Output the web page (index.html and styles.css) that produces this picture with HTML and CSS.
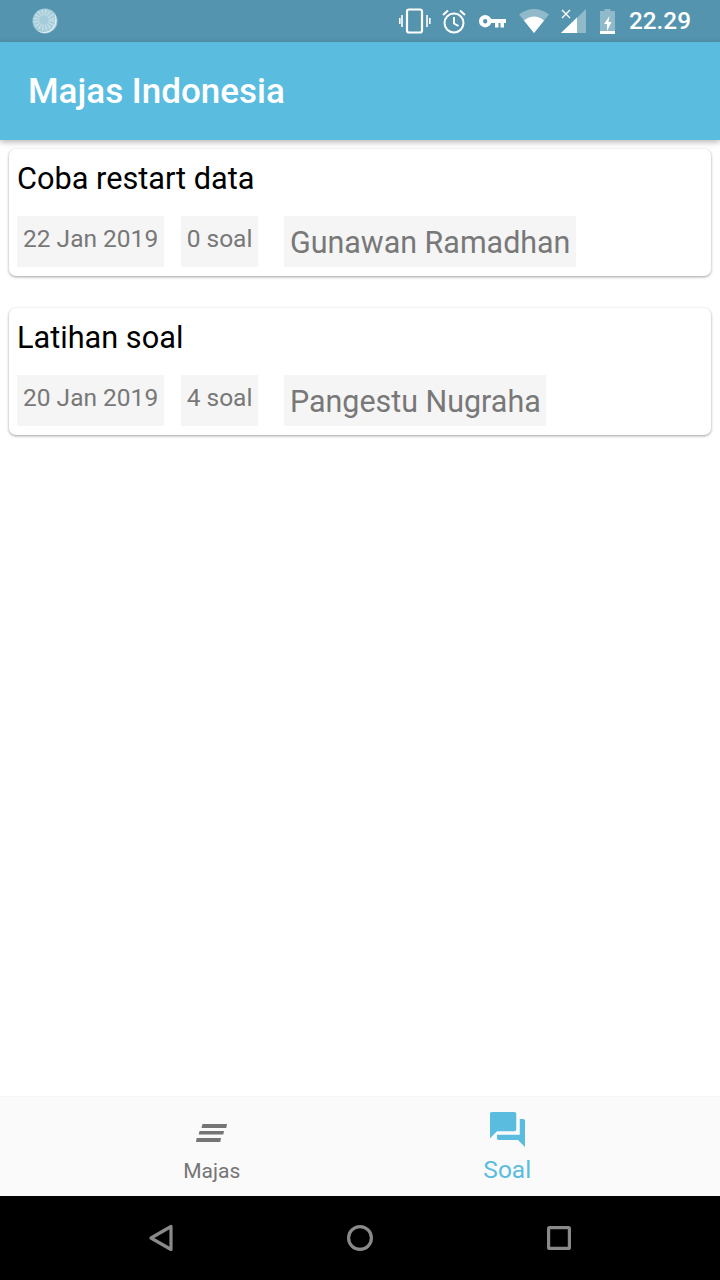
FILE: index.html
```html
<!DOCTYPE html>
<html lang="id">
<head>
<meta charset="utf-8">
<title>Majas Indonesia</title>
<link rel="stylesheet" href="styles.css">
</head>
<body>
<div class="screen">
  <div class="status">
    <svg class="spinner" width="26" height="26" viewBox="0 0 26 26"><circle cx="13" cy="13" r="12.500" fill="#a4ccd9"/><circle cx="12" cy="12" r="7.500" fill="none" stroke="#c3dee6" stroke-width="6" stroke-dasharray="1.500 1.500"/><path d="M20 3A12.500 12.500 0 0 1 4 22A11.500 11.500 0 0 0 20 3Z" fill="#e6f3f6"/></svg>
    <div class="status-right">
      <svg class="ic-vibrate" width="32" height="26" viewBox="0 0 32 26"><rect x="8" y="1.500" width="15" height="23" rx="2" fill="none" stroke="#fff" stroke-width="2.200"/><path d="M3 7v12M0.800 10v6M28 7v12M30.800 10v6" stroke="#fff" stroke-width="1.600" fill="none"/></svg>
      <svg class="ic-alarm" width="24" height="26" viewBox="0 0 24 26"><circle cx="12" cy="15" r="9.500" fill="none" stroke="#fff" stroke-width="2"/><path d="M12 9v6.500l4.500 2.500M1 7l5-4.500M23 7l-5-4.500" fill="none" stroke="#fff" stroke-width="2"/></svg>
      <svg class="ic-key" width="27" height="13" viewBox="0 0 27 13"><circle cx="6.200" cy="6.200" r="4.200" fill="none" stroke="#fff" stroke-width="4"/><path d="M11 4h16v4h-2v4.500h-3.500V8h-2v4.500H16V8h-5z" fill="#fff"/></svg>
      <svg class="ic-wifi" width="30" height="24" viewBox="0 0 30 24"><path d="M0 5.500Q15 -5.500 30 5.500L15 24Z" fill="#fff" opacity=".35"/><path d="M5 11.500Q15 3.500 25 11.500L15 24Z" fill="#fff"/></svg>
      <svg class="ic-signal" width="25" height="24" viewBox="0 0 25 24"><path d="M25 0V24H0Z" fill="#fff" opacity=".35"/><path d="M16 8.600V24H0Z" fill="#fff"/><path d="M1 1l8 8M9 1l-8 8" stroke="#fff" stroke-width="1.300" fill="none"/></svg>
      <svg class="ic-battery" width="15" height="25" viewBox="0 0 15 25"><path d="M4.500 0h6v2H15v23H0V2h4.500z" fill="#fff" opacity=".35"/><path d="M0 22h15v3H0z" fill="#fff"/><path d="M9.500 7L4 15h3v7l4.500-9H8.500z" fill="#fff"/></svg>
      <span class="clock">22.29</span>
    </div>
  </div>
  <header class="appbar"><h1 class="appbar-title">Majas Indonesia</h1></header>
  <main class="list">
    <article class="card">
      <h2 class="card-title">Coba restart data</h2>
      <div class="meta">
        <span class="chip chip-date">22 Jan 2019</span>
        <span class="chip chip-count">0 soal</span>
        <span class="chip chip-name">Gunawan Ramadhan</span>
      </div>
    </article>
    <article class="card">
      <h2 class="card-title">Latihan soal</h2>
      <div class="meta">
        <span class="chip chip-date">20 Jan 2019</span>
        <span class="chip chip-count">4 soal</span>
        <span class="chip chip-name">Pangestu Nugraha</span>
      </div>
    </article>
  </main>
  <nav class="tabs">
    <div class="tab">
      <div class="tab-icon"><svg width="31" height="18" viewBox="0 0 31 18"><path d="M6.500 0H31l-.7 4H5.500zM3.500 7H28l-.7 3.500H2.700zM.7 14H25l-.7 4H0z" fill="#757575"/></svg></div>
      <span class="tab-label">Majas</span>
    </div>
    <div class="tab tab-active">
      <div class="tab-icon"><svg width="35" height="35" viewBox="2 2 20 20"><path d="M21 6h-2v9H6v2c0 .55.45 1 1 1h11l4 4V7c0-.55-.45-1-1-1zm-4 6V3c0-.55-.45-1-1-1H3c-.55 0-1 .45-1 1v14l4-4h10c.55 0 1-.45 1-1z" fill="#5abde0"/></svg></div>
      <span class="tab-label">Soal</span>
    </div>
  </nav>
  <div class="sysnav">
    <svg width="24" height="30" viewBox="0 0 24 30"><path d="M22 3.500v23L2 15Z" fill="none" stroke="#8a8a8a" stroke-width="3.200" stroke-linejoin="round"/></svg>
    <svg width="26" height="26" viewBox="0 0 26 26"><circle cx="13" cy="13" r="11.400" fill="none" stroke="#8a8a8a" stroke-width="3.200"/></svg>
    <svg width="24" height="24" viewBox="0 0 24 24"><rect x="1.600" y="1.600" width="20.800" height="20.800" rx="1" fill="none" stroke="#8a8a8a" stroke-width="3.200"/></svg>
  </div>
</div>
</body>
</html>
```
FILE: styles.css
```css
* { box-sizing: border-box; }
html, body { margin: 0; padding: 0; background: #fff; }
body { font-family: Roboto, "Noto Sans", sans-serif; }
.screen { width: 720px; height: 1280px; display: flex; flex-direction: column; overflow: hidden; }

.status { height: 42px; flex: none; background: #5594ae; display: flex; align-items: center; justify-content: space-between; padding: 0 29px 0 32px; }
.status-right { display: flex; align-items: center; }
.ic-vibrate { margin-right: 11px; }
.ic-alarm { margin-right: 13px; }
.ic-key { margin-right: 13px; }
.ic-wifi { margin-right: 12px; }
.ic-signal { margin-right: 14px; }
.ic-battery { margin-right: 14px; }
.clock { font-size: 24.300px; font-weight: 500; color: #fff; line-height: 42px; }

.appbar { height: 98px; flex: none; background: #5abde0; display: flex; align-items: center; padding-left: 28px; box-shadow: 0 2px 6px rgba(0,0,0,.3); position: relative; z-index: 1; }
.appbar-title { margin: 0; font-size: 35px; font-weight: 500; color: #fff; }

.list { flex: 1; padding: 9px 9px 0; display: flex; flex-direction: column; gap: 32px; background: #fff; }
.card { height: 127px; background: #fff; border-radius: 7px; box-shadow: 0 1px 3px rgba(0,0,0,.38); padding: 0 8px; }
.card-title { margin: 0; height: 59px; padding-top: 10px; font-size: 30.7px; line-height: 40px; font-weight: 400; color: #000; }
.meta { margin-top: 8px; display: flex; height: 51px; }
.chip { background: #f5f5f5; color: #787878; height: 51px; padding: 0 6px; white-space: nowrap; }
.chip-date, .chip-count { font-size: 24.5px; line-height: 46px; }
.chip-date { padding: 0 5.500px 0 6px; }
.chip-count { margin-left: 17px; padding: 0 6px; }
.chip-name { margin-left: 26px; font-size: 30.450px; line-height: 53px; padding: 0 5.500px; }

.tabs { height: 100px; flex: none; background: #fafafa; display: flex; border-top: 1px solid #f5f5f5; padding: 0 65px 0 64px; }
.tab { flex: 1; display: flex; flex-direction: column; align-items: center; color: #757575; }
.tab-icon { height: 61px; display: flex; align-items: flex-end; padding-bottom: 16px; }
.tab-label { font-size: 21px; line-height: 26px; }
.tab-active { color: #5abde0; }
.tab-active .tab-icon { padding-bottom: 11px; }
.tab-active .tab-label { font-size: 24.500px; line-height: 24px; }

.sysnav { height: 84px; flex: none; background: #000; display: flex; align-items: center; justify-content: center; gap: 174px; }
```
